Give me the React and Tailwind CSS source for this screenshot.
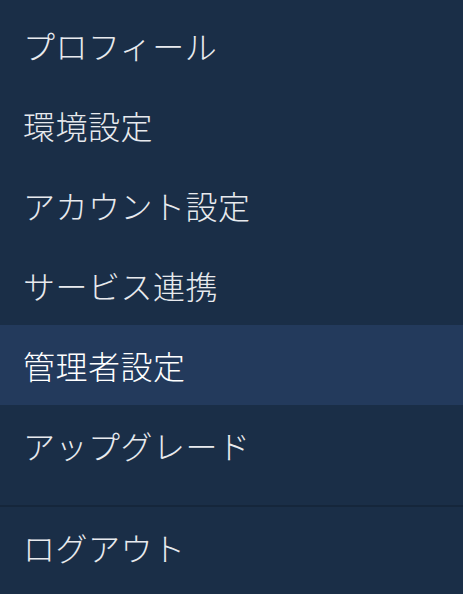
import React from "react";

const items = [
  { label: "プロフィール" },
  { label: "環境設定" },
  { label: "アカウント設定" },
  { label: "サービス連携" },
  { label: "管理者設定", active: true },
  { label: "アップグレード" },
];

export default function App() {
  return (
    <div
      className="w-[463px] h-[594px] bg-[#1a2e47] overflow-hidden"
      style={{ fontFamily: '"Noto Sans CJK JP", "Noto Sans", sans-serif' }}
    >
      <ul className="pt-[5px]">
        {items.map((it) => (
          <li
            key={it.label}
            className={
              "h-[80px] flex items-center px-[23px] text-[32px] leading-none font-light tracking-[0.5px] " +
              (it.active ? "bg-[#233a5c] text-white" : "text-[#e8eaee]")
            }
          >
            {it.label}
          </li>
        ))}
      </ul>
      <div className="mt-[20px] h-[2px] bg-[#15263b]" />
      <div className="h-[80px] flex items-center px-[23px] text-[32px] leading-none font-light tracking-[0.5px] text-[#e8eaee]">
        ログアウト
      </div>
    </div>
  );
}
